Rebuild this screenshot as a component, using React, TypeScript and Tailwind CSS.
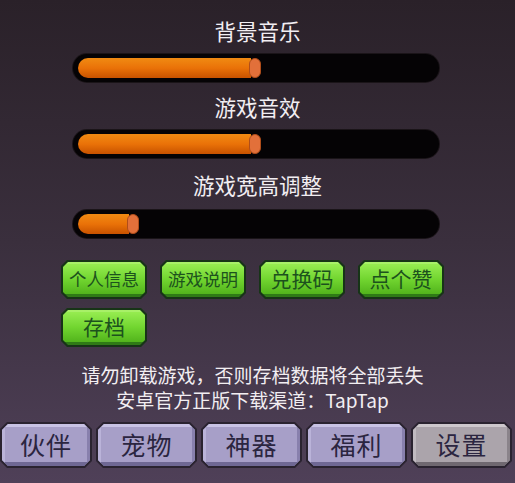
const font = { fontFamily: '"Noto Sans CJK SC", "Noto Sans", sans-serif' };

function Slider({ value }: { value: number }) {
  return (
    <div className="w-[366px] h-[28px] rounded-full bg-[#050305] shadow-[0_0_0_1px_#1a1418] px-[5px] py-[4px] flex items-center">
      <div className="h-full flex items-center" style={{ width: value }}>
        <div className="h-full flex-1 rounded-l-full bg-gradient-to-b from-[#f08a12] via-[#ea7208] to-[#c85200]" />
        <div className="h-[20px] w-[12px] -ml-[2px] rounded-full bg-[#e2703a] border border-[#b04d1a]" />
      </div>
    </div>
  );
}

function GreenButton({ label, small }: { label: string; small?: boolean }) {
  return (
    <div className="w-[86px] h-[39px] bg-[#173417] p-[2px] [clip-path:polygon(6px_0,calc(100%-6px)_0,100%_6px,100%_calc(100%-6px),calc(100%-6px)_100%,6px_100%,0_calc(100%-6px),0_6px)]">
      <div className="w-full h-full flex items-center justify-center bg-gradient-to-b from-[#96ec50] via-[#72d630] to-[#52b41c] border-t-[2px] border-t-[#a8f068] border-b-[3px] border-b-[#2f7a16] [clip-path:polygon(5px_0,calc(100%-5px)_0,100%_5px,100%_calc(100%-5px),calc(100%-5px)_100%,5px_100%,0_calc(100%-5px),0_5px)]">
        <span className={small ? "text-[17.5px] text-[#1c521d]" : "text-[21px] text-[#1c521d]"}>{label}</span>
      </div>
    </div>
  );
}

function Tab({ label, w, active }: { label: string; w: string; active?: boolean }) {
  return (
    <div className={`${w} h-[46px] bg-[#2a2330] p-[2px] [clip-path:polygon(7px_0,calc(100%-7px)_0,100%_7px,100%_calc(100%-7px),calc(100%-7px)_100%,7px_100%,0_calc(100%-7px),0_7px)]`}>
      <div
        className={`w-full h-full flex items-center justify-center border-t-[3px] border-b-[4px] border-l-[3px] border-r-[3px] [clip-path:polygon(6px_0,calc(100%-6px)_0,100%_6px,100%_calc(100%-6px),calc(100%-6px)_100%,6px_100%,0_calc(100%-6px),0_6px)] ${
          active
            ? "bg-[#aba4ab] border-t-[#cdc8cc] border-l-[#c0bac0] border-r-[#8a838a] border-b-[#6f6870]"
            : "bg-[#a79fc8] border-t-[#c8c2e4] border-l-[#bab3d9] border-r-[#8880ad] border-b-[#6f6894]"
        }`}
      >
        <span className="text-[25px] text-[#2b2540] tracking-[1px]">{label}</span>
      </div>
    </div>
  );
}

export default function App() {
  return (
    <div
      className="w-[515px] h-[483px] overflow-hidden bg-gradient-to-b from-[#2a2129] via-[#3a2f3d] to-[#4f4058] flex flex-col items-center"
      style={font}
    >
      <div className="mt-[17px] h-[28px] text-[21.5px] leading-[28px] text-[#f2eef2]">背景音乐</div>
      <div className="mt-[9px] mr-[4px]">
        <Slider value={183} />
      </div>
      <div className="mt-[11px] h-[28px] text-[21.5px] leading-[28px] text-[#f2eef2]">游戏音效</div>
      <div className="mt-[9px] mr-[4px]">
        <Slider value={183} />
      </div>
      <div className="mt-[13px] h-[28px] text-[21.5px] leading-[28px] text-[#f2eef2]">游戏宽高调整</div>
      <div className="mt-[11px] mr-[4px]">
        <Slider value={61} />
      </div>

      <div className="w-full pl-[61px] mt-[22px] flex flex-col gap-[9px]">
        <div className="flex gap-[13px]">
          <GreenButton label="个人信息" small />
          <GreenButton label="游戏说明" small />
          <GreenButton label="兑换码" />
          <GreenButton label="点个赞" />
        </div>
        <div className="flex">
          <GreenButton label="存档" />
        </div>
      </div>

      <div className="mt-[15px] mr-[10px] text-[19px] leading-[25px] text-[#f2eef2] text-center">
        <div>请勿卸载游戏，否则存档数据将全部丢失</div>
        <div>安卓官方正版下载渠道：TapTap</div>
      </div>

      <div className="w-full mt-[10px] flex gap-[4px]">
        <Tab label="伙伴" w="w-[92px]" />
        <Tab label="宠物" w="w-[101px]" />
        <Tab label="神器" w="w-[101px]" />
        <Tab label="福利" w="w-[101px]" />
        <Tab label="设置" w="w-[101px]" active />
      </div>
    </div>
  );
}
